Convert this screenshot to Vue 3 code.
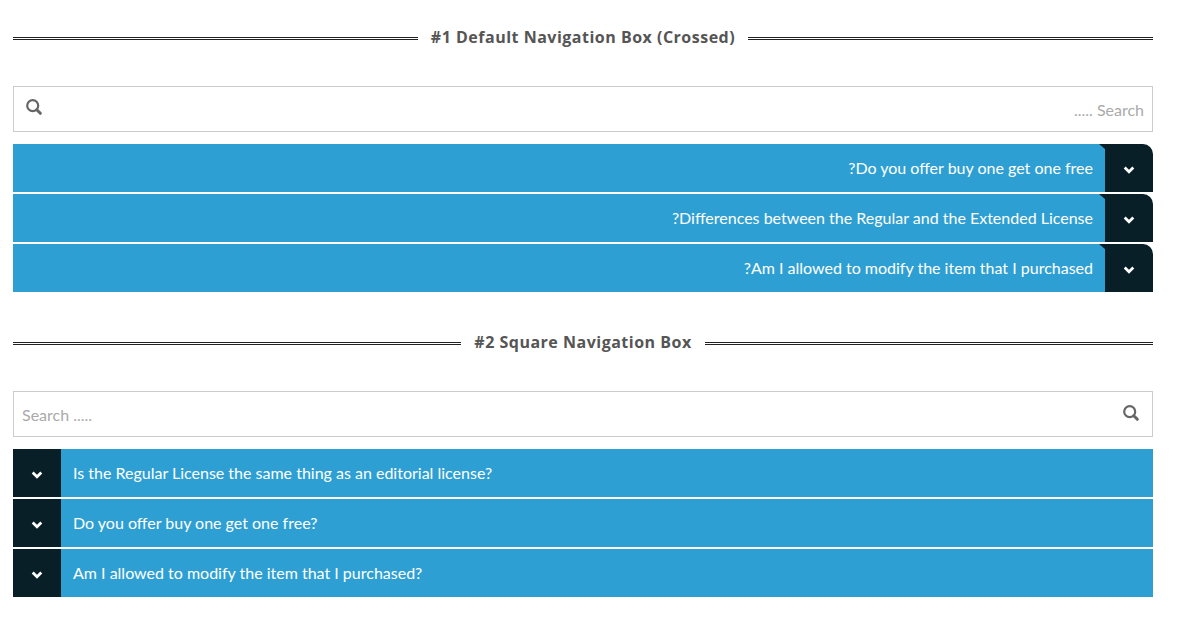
<script setup>
const boxes = [
  {
    id: 'crossed',
    title: '#1 Default Navigation Box (Crossed)',
    dir: 'rtl',
    items: [
      'Do you offer buy one get one free?',
      'Differences between the Regular and the Extended License?',
      'Am I allowed to modify the item that I purchased?'
    ]
  },
  {
    id: 'square',
    title: '#2 Square Navigation Box',
    dir: 'ltr',
    items: [
      'Is the Regular License the same thing as an editorial license?',
      'Do you offer buy one get one free?',
      'Am I allowed to modify the item that I purchased?'
    ]
  }
]
</script>

<template>
  <main class="page">
    <section v-for="box in boxes" :key="box.id" class="box" :class="box.id">
      <h2 class="title">{{ box.title }}</h2>
      <form class="search" :dir="box.dir" role="search" @submit.prevent>
        <input class="field" type="text" placeholder="Search ....." aria-label="Search" />
        <button class="go" type="submit" aria-label="Submit search">
          <svg width="16" height="16" viewBox="0 0 16 16" fill="none" stroke="#666">
            <circle cx="6.7" cy="6.7" r="5.5" stroke-width="2.2" />
            <path d="M10.8 10.8L14.3 14.3" stroke-width="3" stroke-linecap="round" />
          </svg>
        </button>
      </form>
      <ul class="list" :dir="box.dir">
        <li v-for="item in box.items" :key="item">
          <button class="item" type="button" aria-expanded="false">
            <span class="toggle">
              <svg width="12" height="8" viewBox="0 0 12 8" fill="none" stroke="#fff" stroke-width="2.8">
                <path d="M1.7 1.6L6 5.7L10.3 1.6" />
              </svg>
            </span>
            <span class="label">{{ item }}</span>
          </button>
        </li>
      </ul>
    </section>
  </main>
</template>

<style>
body {
  background: #fff;
}
</style>

<style scoped>
.page {
  padding: 24px 28px 0 13px;
  font-family: Lato, "Liberation Sans", sans-serif;
}
.box {
  margin-bottom: 37px;
}
.title {
  display: flex;
  align-items: center;
  gap: 13px;
  margin: 0 0 36px;
  color: #555;
  font: 700 16px/26px "Open Sans", sans-serif;
  letter-spacing: 0.5px;
}
.title::before,
.title::after {
  content: "";
  flex: 1;
  border-top: 3px double #222;
  margin-top: 3px;
}
.search {
  display: flex;
  height: 46px;
  box-sizing: border-box;
  margin-bottom: 12px;
  border: 1px solid #ccc;
}
.field {
  flex: 1;
  min-width: 0;
  border: 0;
  padding: 1px 8px 0;
  outline: none;
  background: none;
  color: #555;
  font: 400 16px/24px Lato, sans-serif;
}
.field::placeholder {
  color: #aaa;
  opacity: 1;
}
.go {
  width: 42px;
  padding: 0 0 2px;
  border: 0;
  background: none;
  display: flex;
  align-items: center;
  justify-content: center;
}
.crossed .go {
  width: 40px;
  padding-bottom: 4px;
}
.list {
  display: grid;
  gap: 2px;
  margin: 0;
  padding: 0;
  list-style: none;
}
.item {
  display: flex;
  width: 100%;
  height: 48px;
  padding: 0;
  border: 0;
  background: #081f27;
  color: #fff;
  font: 400 16px/24px Lato, sans-serif;
  text-align: start;
}
.toggle {
  width: 48px;
  height: 48px;
  padding-top: 4px;
  box-sizing: border-box;
  display: flex;
  align-items: center;
  justify-content: center;
}
.label {
  flex: 1;
  padding: 12px;
  background: #2e9fd3;
}
.crossed .item {
  border-top-right-radius: 10px;
}
.crossed .label {
  clip-path: polygon(0 0, calc(100% - 6px) 0, 100% 5px, 100% 100%, 0 100%);
}
</style>
